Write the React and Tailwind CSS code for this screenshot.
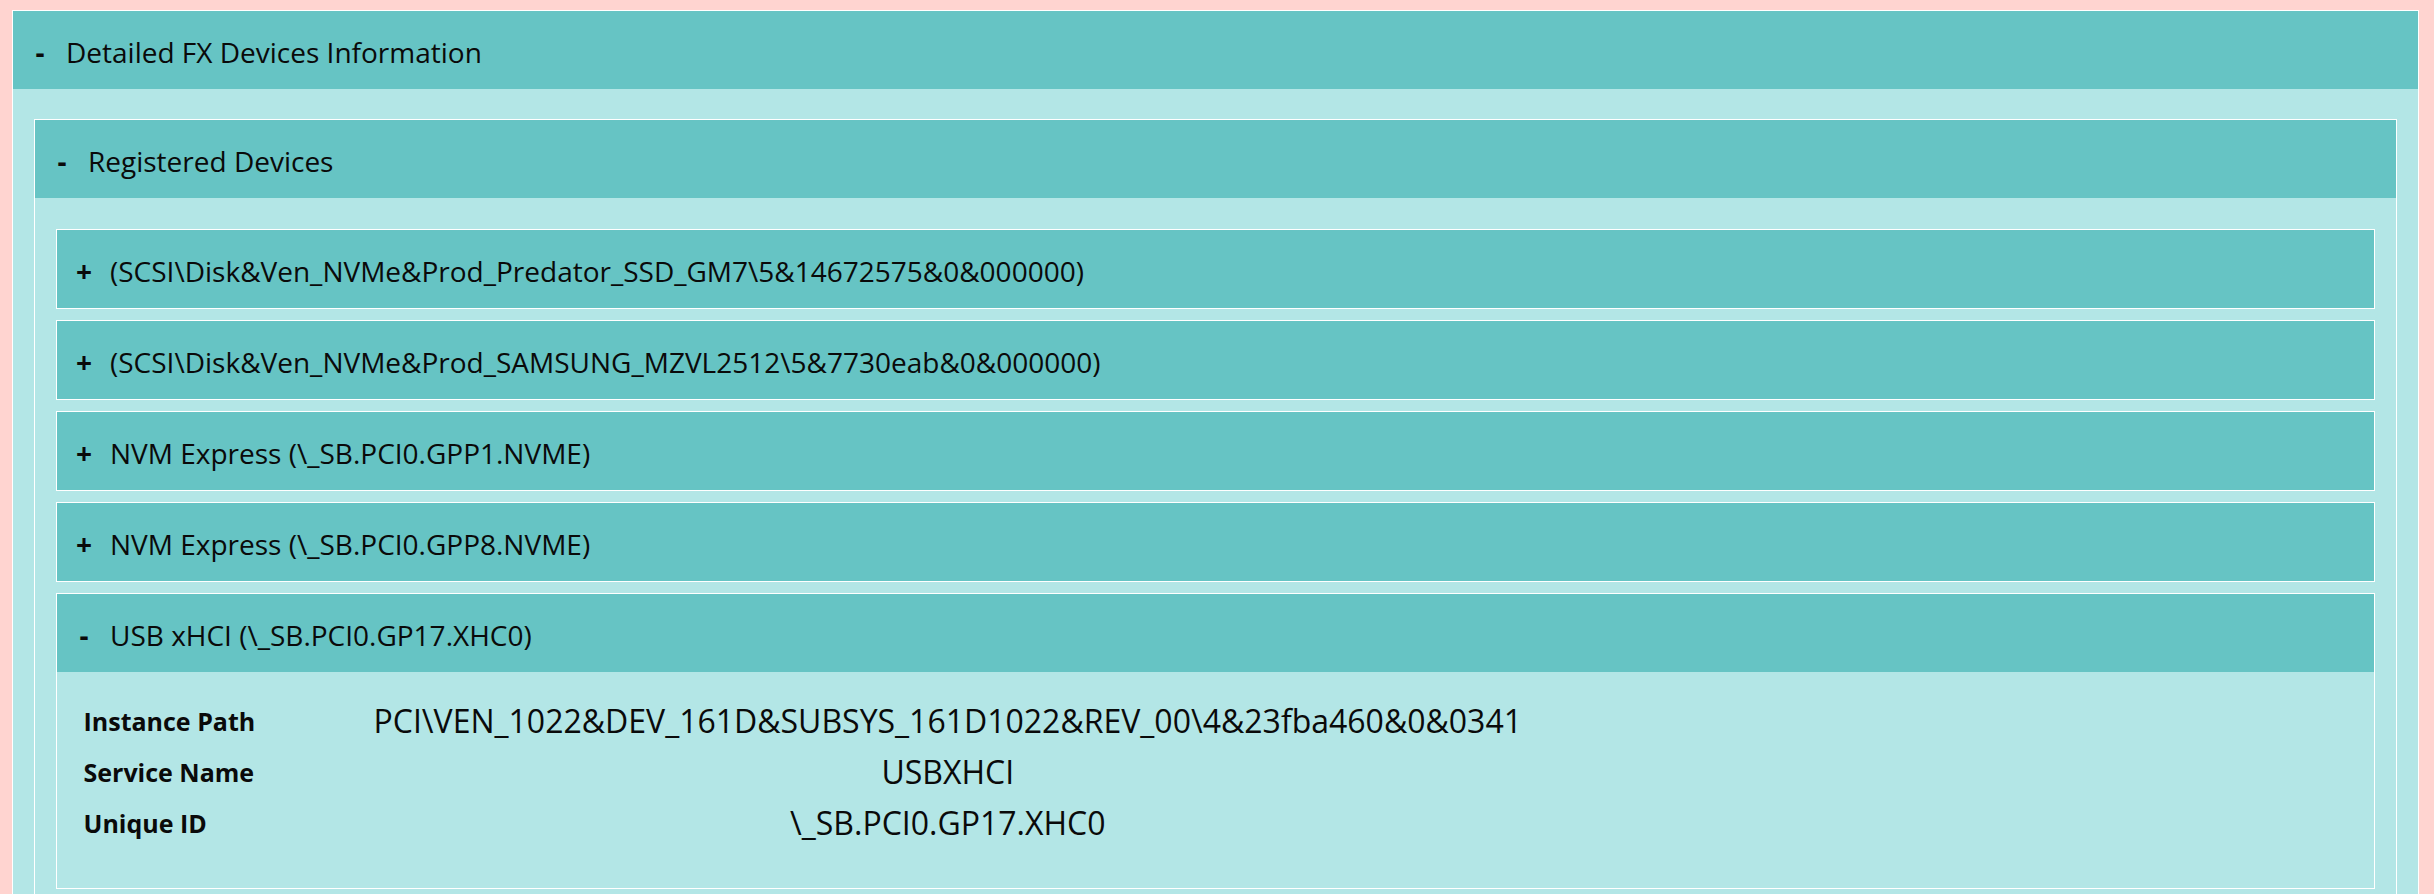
import React from "react";

function Header({ sym, title }) {
  return (
    <div className="h-[78px] bg-[#66c4c4] flex items-center pl-[14px] pt-[3px] text-[28px] text-[#0a0a0a]">
      <span className="w-[26px] text-center font-bold leading-none">{sym}</span>
      <span className="ml-[13px] leading-none">{title}</span>
    </div>
  );
}

function Box({ sym, title, children, bodyClass }) {
  return (
    <div className="border border-white">
      <Header sym={sym} title={title} />
      {children !== undefined && (
        <div className={"bg-[#b3e6e6] " + (bodyClass || "")}>{children}</div>
      )}
    </div>
  );
}

const details = [
  ["Instance Path", "PCI\\VEN_1022&DEV_161D&SUBSYS_161D1022&REV_00\\4&23fba460&0&0341"],
  ["Service Name", "USBXHCI"],
  ["Unique ID", "\\_SB.PCI0.GP17.XHC0"],
];

export default function App() {
  return (
    <div className="h-[894px] overflow-hidden bg-[#ffd4d0] pt-[10px] pl-[12px] pr-[15px] [font-family:'Open_Sans',sans-serif]">
      <Box sym="-" title="Detailed FX Devices Information" bodyClass="px-[21px] pt-[30px] pb-[30px]">
        <Box sym="-" title="Registered Devices" bodyClass="px-[21px] pt-[31px] pb-[20px] flex flex-col gap-[11px]">
          <Box sym="+" title="(SCSI\Disk&Ven_NVMe&Prod_Predator_SSD_GM7\5&14672575&0&000000)" />
          <Box sym="+" title="(SCSI\Disk&Ven_NVMe&Prod_SAMSUNG_MZVL2512\5&7730eab&0&000000)" />
          <Box sym="+" title="NVM Express (\_SB.PCI0.GPP1.NVME)" />
          <Box sym="+" title="NVM Express (\_SB.PCI0.GPP8.NVME)" />
          <Box sym="-" title="USB xHCI (\_SB.PCI0.GP17.XHC0)" bodyClass="pl-[26.5px] pt-[23px] pb-[40px]">
            <div className="grid grid-cols-[290px_max-content] text-[#0a0a0a]">
              {details.map(([k, v]) => (
                <React.Fragment key={k}>
                  <div className="h-[51px] flex items-center font-bold text-[25px] pt-[2px]">{k}</div>
                  <div className="h-[51px] flex items-center justify-center text-[32px]">{v}</div>
                </React.Fragment>
              ))}
            </div>
          </Box>
        </Box>
      </Box>
    </div>
  );
}
